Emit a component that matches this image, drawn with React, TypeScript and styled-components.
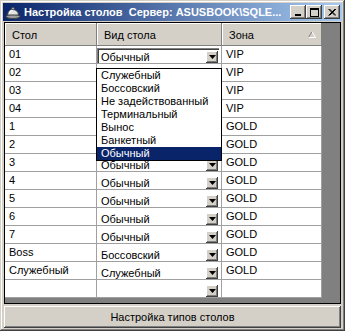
import React from 'react';
import styled, { createGlobalStyle } from 'styled-components';

const Global = createGlobalStyle`
  html, body { margin: 0; padding: 0; background: #D4D0C8; }
  body { font-family: "Liberation Sans", Arial, sans-serif; font-size: 11px; color: #000; }
  #root { width: 345px; height: 331px; }
`;

const Window = styled.div`
  width: 345px;
  height: 331px;
  box-sizing: border-box;
  background: #D4D0C8;
  padding: 3px;
  box-shadow: inset -1px -1px #404040, inset 1px 1px #D4D0C8, inset -2px -2px #808080, inset 2px 2px #ffffff;
  display: flex;
  flex-direction: column;
`;

const TitleBar = styled.div`
  height: 18px;
  flex: none;
  display: flex;
  align-items: center;
  padding: 0 2px 0 2px;
  background: linear-gradient(to right, #0A246A, #A6CAF0);
`;

const TitleText = styled.div`
  flex: 1;
  margin-left: 3px;
  color: #fff;
  font-weight: bold;
  font-size: 11px;
  white-space: pre;
  overflow: hidden;
`;

const CaptionButtons = styled.div`
  display: flex;
  align-items: center;
`;

const CaptionButton = styled.div<{ $gap?: boolean }>`
  width: 16px;
  height: 14px;
  margin-left: ${p => (p.$gap ? '2px' : '0')};
  background: #D4D0C8;
  box-shadow: inset -1px -1px #404040, inset 1px 1px #ffffff, inset -2px -2px #808080;
  display: flex;
  align-items: center;
  justify-content: center;
`;

const Content = styled.div`
  flex: 1;
  display: flex;
  flex-direction: column;
  margin: 1px 1px 0 1px;
`;

const GridBox = styled.div`
  height: 282px;
  box-sizing: border-box;
  border: 1px solid #000;
  background: #808080;
  overflow: hidden;
`;

const GridInner = styled.div`
  width: 317px;
  display: flex;
  flex-direction: column;
`;

const HeaderRow = styled.div`
  display: flex;
  height: 23px;
`;

const HeaderCell = styled.div<{ $w: number }>`
  width: ${p => p.$w}px;
  box-sizing: border-box;
  background: #D4D0C8;
  box-shadow: inset -1px -1px #808080, inset 1px 1px #ffffff;
  padding: 0 6px 0 7px;
  display: flex;
  align-items: center;
  justify-content: space-between;
`;

const Row = styled.div`
  display: flex;
  height: 18px;
  box-sizing: border-box;
  border-bottom: 1px solid #a0a0a0;
  background: #fff;
`;

const Cell = styled.div<{ $w: number }>`
  width: ${p => p.$w}px;
  box-sizing: border-box;
  border-right: 1px solid #a0a0a0;
  padding-left: 4px;
  line-height: 16px;
  white-space: nowrap;
  position: relative;
`;

const ComboCell = styled.div<{ $w: number }>`
  width: ${p => p.$w}px;
  box-sizing: border-box;
  border-right: 1px solid #a0a0a0;
  position: relative;
`;

const Combo = styled.div<{ $active?: boolean; $covered?: boolean }>`
  margin: 2px 2px 0 0;
  height: 15px;
  display: flex;
  align-items: center;
  visibility: ${p => (p.$covered ? 'hidden' : 'visible')};
  box-shadow: ${p => (p.$active ? 'inset 1px 1px #808080, inset 2px 2px #404040' : 'none')};
`;

const ComboText = styled.div`
  flex: 1;
  padding-left: 4px;
  padding-top: 2px;
  white-space: nowrap;
`;

const DropButton = styled.div`
  width: 12px;
  height: 12px;
  margin-right: 1px;
  margin-top: 2px;
  background: #D4D0C8;
  box-shadow: inset -1px -1px #404040, inset 1px 1px #ffffff, inset -2px -2px #808080;
  display: flex;
  align-items: center;
  justify-content: center;
`;

const DropList = styled.div`
  position: absolute;
  left: -1px;
  top: 22px;
  width: 126px;
  box-sizing: border-box;
  border: 1px solid #000;
  background: #fff;
  z-index: 2;
`;

const DropItem = styled.div<{ $selected?: boolean }>`
  height: 13px;
  line-height: 13px;
  padding-left: 4px;
  white-space: nowrap;
  background: ${p => (p.$selected ? '#0A246A' : '#fff')};
  color: ${p => (p.$selected ? '#fff' : '#000')};
`;

const BottomButton = styled.div`
  margin-top: 2px;
  height: 22px;
  background: #D4D0C8;
  box-shadow: inset -1px -1px #404040, inset 1px 1px #ffffff, inset -2px -2px #808080;
  display: flex;
  align-items: center;
  justify-content: center;
`;

const Arrow = () => (
  <svg width="7" height="4" viewBox="0 0 7 4">
    <polygon points="0,0 7,0 3.5,4" fill="#000" />
  </svg>
);

const AppIcon = () => (
  <svg width="16" height="16" viewBox="0 0 16 16">
    <ellipse cx="8" cy="12.5" rx="7" ry="2" fill="#a0a0a0" stroke="#404040" strokeWidth="1" />
    <path d="M2.5 11 A5.5 5.5 0 0 1 13.5 11 Z" fill="#e4e4e4" stroke="#404040" strokeWidth="1" />
    <path d="M4.5 9 A3.5 3.5 0 0 1 8 6" fill="none" stroke="#fff" strokeWidth="1.2" />
    <circle cx="8" cy="4.5" r="1.2" fill="#c0c0c0" stroke="#404040" strokeWidth="0.8" />
  </svg>
);

const SortGlyph = () => (
  <svg width="8" height="7" viewBox="0 0 8 7">
    <path d="M0.5 6.5 L4 0.5" stroke="#808080" strokeWidth="1" fill="none" />
    <path d="M4 0.5 L7.5 6.5 L0.5 6.5" stroke="#ffffff" strokeWidth="1" fill="none" />
  </svg>
);

const COLS = [92, 125, 100];

const rows: [string, string, string][] = [
  ['01', 'Обычный', 'VIP'],
  ['02', 'Обычный', 'VIP'],
  ['03', 'Обычный', 'VIP'],
  ['04', 'Обычный', 'VIP'],
  ['1', 'Обычный', 'GOLD'],
  ['2', 'Обычный', 'GOLD'],
  ['3', 'Обычный', 'GOLD'],
  ['4', 'Обычный', 'GOLD'],
  ['5', 'Обычный', 'GOLD'],
  ['6', 'Обычный', 'GOLD'],
  ['7', 'Обычный', 'GOLD'],
  ['Boss', 'Боссовский', 'GOLD'],
  ['Служебный', 'Служебный', 'GOLD'],
  ['', '', ''],
];

const options = ['Служебный', 'Боссовский', 'Не задействованный', 'Терминальный', 'Вынос', 'Банкетный', 'Обычный'];

export default function App() {
  return (
    <>
      <Global />
      <Window>
        <TitleBar>
          <AppIcon />
          <TitleText>{'Настройка столов  Сервер: ASUSBOOK\\SQLE...'}</TitleText>
          <CaptionButtons>
            <CaptionButton>
              <svg width="8" height="8" viewBox="0 0 8 8"><rect x="1" y="6" width="6" height="2" fill="#000" /></svg>
            </CaptionButton>
            <CaptionButton>
              <svg width="9" height="9" viewBox="0 0 9 9"><rect x="0.5" y="0.5" width="8" height="8" fill="none" stroke="#000" /><rect x="0" y="1" width="9" height="1" fill="#000" /></svg>
            </CaptionButton>
            <CaptionButton $gap>
              <svg width="8" height="7" viewBox="0 0 8 7"><path d="M0.5 0 L7 6.5 M1.5 0 L8 6.5 M7 0 L0.5 6.5 M8 0 L1.5 6.5" stroke="#000" strokeWidth="1" /></svg>
            </CaptionButton>
          </CaptionButtons>
        </TitleBar>
        <Content>
          <GridBox>
            <GridInner>
              <HeaderRow>
                <HeaderCell $w={COLS[0]}>Стол</HeaderCell>
                <HeaderCell $w={COLS[1]}>Вид стола</HeaderCell>
                <HeaderCell $w={COLS[2]}>Зона<SortGlyph /></HeaderCell>
              </HeaderRow>
              {rows.map((r, i) => (
                <Row key={i}>
                  <Cell $w={COLS[0]}>{r[0]}</Cell>
                  <ComboCell $w={COLS[1]}>
                    <Combo $active={i === 0} $covered={i >= 1 && i <= 5}>
                      <ComboText>{r[1]}</ComboText>
                      <DropButton><Arrow /></DropButton>
                    </Combo>
                    {i === 0 && (
                      <DropList>
                        {options.map(o => (
                          <DropItem key={o} $selected={o === 'Обычный'}>{o}</DropItem>
                        ))}
                      </DropList>
                    )}
                  </ComboCell>
                  <Cell $w={COLS[2]}>{r[2]}</Cell>
                </Row>
              ))}
            </GridInner>
          </GridBox>
          <BottomButton>Настройка типов столов</BottomButton>
        </Content>
      </Window>
    </>
  );
}
